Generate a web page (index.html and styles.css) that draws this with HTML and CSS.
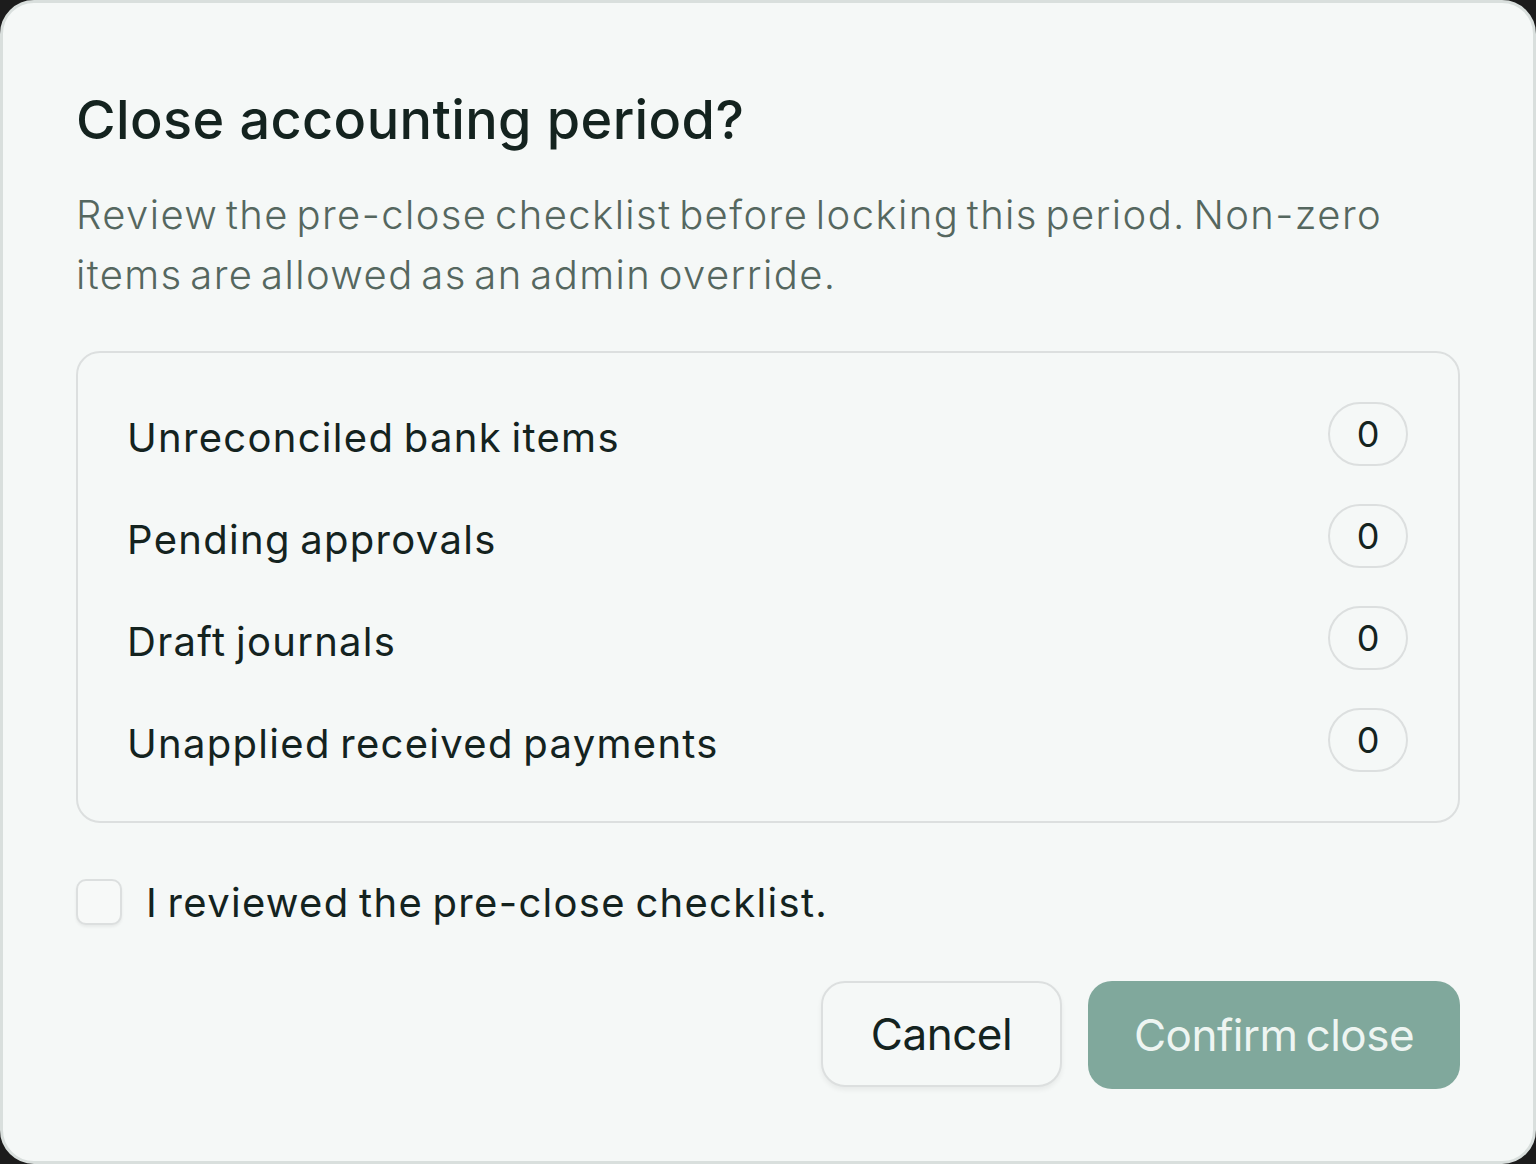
FILE: index.html
```html
<!DOCTYPE html>
<html lang="en">
<head>
<meta charset="utf-8">
<title>Close accounting period?</title>
<link rel="stylesheet" href="styles.css">
</head>
<body>
<div class="dialog">
  <h1 class="title">Close accounting period?</h1>
  <p class="desc">Review the pre-close checklist before locking this period. Non-zero items are allowed as an admin override.</p>
  <div class="checklist">
    <div class="row"><span class="label">Unreconciled bank items</span><span class="badge">0</span></div>
    <div class="row"><span class="label">Pending approvals</span><span class="badge">0</span></div>
    <div class="row"><span class="label">Draft journals</span><span class="badge">0</span></div>
    <div class="row"><span class="label">Unapplied received payments</span><span class="badge">0</span></div>
  </div>
  <label class="confirm-check"><span class="box"></span><span class="check-text">I reviewed the pre-close checklist.</span></label>
  <div class="actions">
    <button class="btn btn-cancel">Cancel</button>
    <button class="btn btn-primary">Confirm close</button>
  </div>
</div>
</body>
</html>
```
FILE: styles.css
```css
html, body {
  margin: 0;
  padding: 0;
  background: #1c1c1c;
}
body {
  width: 1536px;
  height: 1164px;
  font-family: Inter, "Noto Sans", sans-serif;
  color: #14231f;
}
.dialog {
  box-sizing: border-box;
  width: 1536px;
  height: 1164px;
  background: #f5f8f7;
  border: 3px solid #d9dfdd;
  border-radius: 34px;
  padding: 82px 73px 0 73px;
  display: flex;
  flex-direction: column;
}
.title {
  margin: 0;
  font-size: 54px;
  font-weight: 500;
  line-height: 70px;
  letter-spacing: 0.4px;
  color: #14231f;
}
.desc {
  margin: 30px 0 0 0;
  width: 1340px;
  font-size: 40px;
  font-weight: 300;
  line-height: 60px;
  color: #55675f;
  letter-spacing: 1.4px;
  word-spacing: -5px;
}
.checklist {
  margin-top: 46px;
  border: 2px solid #dcdfdf;
  border-radius: 24px;
  padding: 50px 50px 50px 49px;
  display: flex;
  flex-direction: column;
  gap: 40px;
}
.row {
  display: flex;
  align-items: center;
  justify-content: space-between;
  height: 62px;
}
.label {
  font-size: 40px;
  font-weight: 400;
  letter-spacing: 1.3px;
  word-spacing: -3px;
  color: #14231f;
  position: relative;
  top: 3px;
}
.badge {
  box-sizing: border-box;
  width: 80px;
  height: 64px;
  border: 2px solid #dcdfdf;
  border-radius: 32px;
  display: flex;
  align-items: center;
  justify-content: center;
  font-size: 36px;
  color: #14231f;
}
.confirm-check {
  margin-top: 56px;
  display: flex;
  align-items: center;
  gap: 24px;
  height: 46px;
}
.box {
  box-sizing: border-box;
  width: 46px;
  height: 46px;
  border: 2px solid #dcdfdf;
  border-radius: 10px;
  background: #f7f9f8;
  box-shadow: 0 2px 3px rgba(0,0,0,0.06);
}
.check-text {
  font-size: 40px;
  letter-spacing: 1.3px;
  word-spacing: -3px;
  color: #14231f;
}
.actions {
  margin-top: 56px;
  display: flex;
  justify-content: flex-end;
  gap: 26px;
}
.btn {
  font-family: Inter, "Noto Sans", sans-serif;
  font-size: 44px;
  border-radius: 24px;
  height: 106px;
  letter-spacing: -0.5px;
  word-spacing: -4px;
  cursor: pointer;
}
.btn-cancel {
  width: 241px;
  background: #f5f8f7;
  border: 2px solid #dcdfdf;
  color: #14231f;
  box-shadow: 0 3px 5px rgba(0,0,0,0.06);
}
.btn-primary {
  width: 372px;
  height: 108px;
  background: #80a89c;
  border: none;
  color: #eef5f2;
}
```
